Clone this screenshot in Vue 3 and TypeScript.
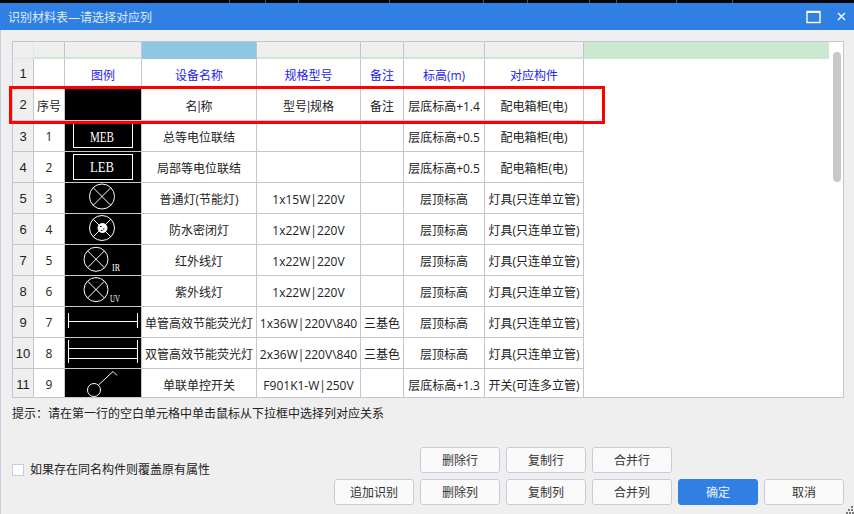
<template>
  <div class="page">
    <svg class="strip" width="854" height="3">
      <rect width="854" height="3" fill="#050505" />
      <rect v-for="x in stripTicks" :key="x" :x="x" y="0" width="1" height="3" fill="#1f5f9f" />
    </svg>

    <div class="titlebar">
      <span class="title">识别材料表—请选择对应列</span>
      <div class="win-btns">
        <svg width="15" height="14" viewBox="0 0 15 14">
          <rect x="1" y="1.5" width="13" height="11" fill="none" stroke="#fff" stroke-width="1.4" />
          <rect x="1" y="1" width="13" height="2" fill="#fff" />
        </svg>
        <svg width="9" height="9" viewBox="0 0 9 9">
          <path d="M1 1 L8 8 M8 1 L1 8" stroke="#fff" stroke-width="1.4" fill="none" />
        </svg>
      </div>
    </div>

    <div class="content">
      <div class="sheet-wrap">
        <div class="sheet">
          <div class="row head">
            <div class="cell rh"></div>
            <div class="cell"></div>
            <div class="cell"></div>
            <div class="cell picked"></div>
            <div class="cell"></div>
            <div class="cell"></div>
            <div class="cell"></div>
            <div class="cell"></div>
            <div class="rest"></div>
          </div>

          <div class="row first">
            <div class="cell rh">1</div>
            <div class="cell"></div>
            <div v-for="h in headers" :key="h" class="cell blue">{{ h }}</div>
          </div>

          <div class="row second">
            <div class="cell rh">2</div>
            <div class="cell">序号</div>
            <div class="cell black"></div>
            <div class="cell">名<span class="bar">|</span>称</div>
            <div class="cell">型号<span class="bar">|</span>规格</div>
            <div class="cell">备注</div>
            <div class="cell">层底标高+1.4</div>
            <div class="cell">配电箱柜(电)</div>
          </div>

          <div v-for="(r, i) in rows" :key="i" class="row">
            <div class="cell rh">{{ i + 3 }}</div>
            <div class="cell num">{{ i + 1 }}</div>
            <div class="cell black">
              <svg width="76" height="30" viewBox="0 0 76 30" fill="none" stroke="#fff">
                <template v-if="r.icon === 'meb'">
                  <rect x="8.5" y="-5.5" width="59" height="32" />
                  <text x="25" y="21" class="cad" textLength="24" lengthAdjust="spacingAndGlyphs">MEB</text>
                </template>
                <template v-else-if="r.icon === 'leb'">
                  <rect x="8.5" y="2.5" width="59" height="25" />
                  <text x="25" y="20" class="cad" textLength="24" lengthAdjust="spacingAndGlyphs">LEB</text>
                </template>
                <template v-else-if="r.icon === 'lamp'">
                  <circle cx="37" cy="13.5" r="12.5" />
                  <path d="M28.2 4.7 L45.8 22.3 M45.8 4.7 L28.2 22.3" />
                </template>
                <template v-else-if="r.icon === 'sealed'">
                  <circle cx="37" cy="14" r="12.5" />
                  <path d="M28.2 5.2 L45.8 22.8 M45.8 5.2 L28.2 22.8" />
                  <circle cx="37.5" cy="14" r="4.5" fill="#fff" />
                  <path d="M35 12.5 h1.5 M38 15 h1.5 M36 16.5 h1.5" stroke="#000" />
                </template>
                <template v-else-if="r.icon === 'ir'">
                  <circle cx="31" cy="14.3" r="12" />
                  <path d="M22.5 5.8 L39.5 22.8 M39.5 5.8 L22.5 22.8" />
                  <text x="47" y="26" class="cad small" textLength="8" lengthAdjust="spacingAndGlyphs">IR</text>
                </template>
                <template v-else-if="r.icon === 'uv'">
                  <circle cx="31" cy="13.6" r="12" />
                  <path d="M22.5 5.1 L39.5 22.1 M39.5 5.1 L22.5 22.1" />
                  <text x="45" y="26" class="cad small" textLength="10" lengthAdjust="spacingAndGlyphs">UV</text>
                </template>
                <template v-else-if="r.icon === 'tube1'">
                  <path d="M3.5 6 V21 M72.5 6 V21 M3.5 14.5 H72.5" />
                </template>
                <template v-else-if="r.icon === 'tube2'">
                  <path d="M3.5 2 V25 M72.5 2 V25 M3.5 10.5 H72.5 M3.5 20.5 H72.5" />
                </template>
                <template v-else-if="r.icon === 'switch'">
                  <circle cx="29" cy="21" r="6.5" />
                  <path d="M33.5 16 L48 2.5 L52 6.5" />
                </template>
              </svg>
            </div>
            <div class="cell">{{ r.name }}</div>
            <div class="cell">{{ r.spec }}</div>
            <div class="cell">{{ r.note }}</div>
            <div class="cell">{{ r.level }}</div>
            <div class="cell">{{ r.part }}</div>
          </div>
        </div>
        <div class="scroll-thumb"></div>
        <div class="red-box"></div>
      </div>

      <div class="hint">提示：请在第一行的空白单元格中单击鼠标从下拉框中选择列对应关系</div>

      <div class="bottom">
        <label class="check">
          <span class="box"></span>
          如果存在同名构件则覆盖原有属性
        </label>
        <div class="actions">
          <div class="btn-row">
            <button class="btn">删除行</button>
            <button class="btn">复制行</button>
            <button class="btn">合并行</button>
            <span class="btn-gap"></span>
          </div>
          <div class="btn-row">
            <button class="btn">追加识别</button>
            <button class="btn">删除列</button>
            <button class="btn">复制列</button>
            <button class="btn">合并列</button>
            <button class="btn primary">确定</button>
            <button class="btn">取消</button>
          </div>
        </div>
      </div>
    </div>

    <svg class="grip" width="8" height="8" viewBox="0 0 8 8" fill="#7a7a7a">
      <rect x="5" y="0" width="2" height="2" />
      <rect x="2" y="3" width="2" height="2" />
      <rect x="5" y="3" width="2" height="2" />
      <rect x="0" y="6" width="2" height="2" />
      <rect x="3" y="6" width="2" height="2" />
      <rect x="6" y="6" width="2" height="2" />
    </svg>
  </div>
</template>

<script setup lang="ts">
type Icon = 'meb' | 'leb' | 'lamp' | 'sealed' | 'ir' | 'uv' | 'tube1' | 'tube2' | 'switch'

interface Row {
  icon: Icon
  name: string
  spec: string
  note: string
  level: string
  part: string
}

const stripTicks = [229, 265, 298, 389, 483, 527, 589, 616, 676, 732]

const headers = ['图例', '设备名称', '规格型号', '备注', '标高(m)', '对应构件']

const rows: Row[] = [
  { icon: 'meb', name: '总等电位联结', spec: '', note: '', level: '层底标高+0.5', part: '配电箱柜(电)' },
  { icon: 'leb', name: '局部等电位联结', spec: '', note: '', level: '层底标高+0.5', part: '配电箱柜(电)' },
  { icon: 'lamp', name: '普通灯(节能灯)', spec: '1x15W|220V', note: '', level: '层顶标高', part: '灯具(只连单立管)' },
  { icon: 'sealed', name: '防水密闭灯', spec: '1x22W|220V', note: '', level: '层顶标高', part: '灯具(只连单立管)' },
  { icon: 'ir', name: '红外线灯', spec: '1x22W|220V', note: '', level: '层顶标高', part: '灯具(只连单立管)' },
  { icon: 'uv', name: '紫外线灯', spec: '1x22W|220V', note: '', level: '层顶标高', part: '灯具(只连单立管)' },
  { icon: 'tube1', name: '单管高效节能荧光灯', spec: '1x36W|220V\\840', note: '三基色', level: '层顶标高', part: '灯具(只连单立管)' },
  { icon: 'tube2', name: '双管高效节能荧光灯', spec: '2x36W|220V\\840', note: '三基色', level: '层顶标高', part: '灯具(只连单立管)' },
  { icon: 'switch', name: '单联单控开关', spec: 'F901K1-W|250V', note: '', level: '层底标高+1.3', part: '开关(可连多立管)' }
]
</script>

<style scoped>
.page {
  position: relative;
  width: 854px;
  height: 514px;
  overflow: hidden;
  background: #efefef;
  font-family: "Open Sans", "Noto Sans CJK SC", sans-serif;
  font-size: 12px;
  color: #222;
  display: flex;
  flex-direction: column;
}

.strip {
  display: block;
  flex-shrink: 0;
}

.titlebar {
  height: 27px;
  flex-shrink: 0;
  background: #2f80e2;
  display: flex;
  align-items: center;
  justify-content: space-between;
  padding: 0 8px;
}
.title {
  color: #dfeafa;
  font-size: 12px;
}
.win-btns {
  display: flex;
  align-items: center;
  gap: 16px;
}
.win-btns svg {
  display: block;
}

.content {
  flex: 1;
  min-height: 0;
  display: flex;
  flex-direction: column;
  padding: 11px 10px 10px 11px;
  border-left: 1px solid #c8cce0;
}

.sheet-wrap {
  position: relative;
  height: 357px;
  flex-shrink: 0;
  background: #fff;
  border: 1px solid #c5c7d0;
  box-sizing: border-box;
}
.sheet {
  height: 100%;
  overflow: hidden;
}

.row {
  display: grid;
  grid-template-columns: 21px 31px 77px 115px 104px 43px 81px 99px;
  height: 31px;
}
.row.head {
  grid-template-columns: 21px 31px 77px 115px 104px 43px 81px 99px 245px;
  height: 17px;
}
.row.first {
  height: 28px;
}
.row.second {
  height: 34px;
}

.cell {
  display: flex;
  align-items: center;
  justify-content: center;
  white-space: nowrap;
  overflow: hidden;
  padding-top: 2px;
  border-right: 1px solid #c5c7d0;
  border-bottom: 1px solid #c5c7d0;
  box-sizing: border-box;
}
.num {
  padding-top: 0;
}
.row.first .cell,
.row.second .cell {
  padding-top: 4px;
}
.rh {
  background: #efefef;
  font-family: "Liberation Sans", sans-serif;
  font-size: 13px;
  padding-top: 0;
}
.row.first .rh,
.row.second .rh {
  padding-top: 2px;
}
.bar {
  font-family: "Liberation Sans", sans-serif;
  color: #4a2a6a;
}
.head .cell {
  background: #efefef;
  border-bottom: 2px solid #cde8d0;
}
.head .rh {
  border-bottom: 1px solid #e4e4e4;
  border-right: 1px solid #e4e4e4;
}
.head .picked {
  background: #8fc7e3;
  border-bottom-color: #8fc7e3;
}
.rest {
  background: #cde8d0;
}
.blue {
  color: #2222f0;
}
.black {
  background: #000;
  padding: 0;
  align-items: flex-start;
}
.black svg {
  display: block;
  overflow: visible;
  shape-rendering: crispEdges;
}
.black svg circle,
.black svg path {
  shape-rendering: geometricPrecision;
}
.cad {
  font-family: "Liberation Serif", serif;
  font-size: 14px;
  fill: #fff;
  stroke: none;
}
.cad.small {
  font-size: 10.5px;
}

.scroll-thumb {
  position: absolute;
  left: 820px;
  top: 10px;
  width: 8px;
  height: 130px;
  border-radius: 4px;
  background: #c8c8c8;
}
.red-box {
  position: absolute;
  left: -4px;
  top: 44px;
  width: 596px;
  height: 38px;
  border: 3px solid #f00;
  box-sizing: border-box;
  pointer-events: none;
}

.hint {
  margin-top: 7px;
  line-height: 18px;
}

.bottom {
  flex: 1;
  min-height: 0;
  display: flex;
  justify-content: space-between;
  align-items: flex-start;
  padding-top: 24px;
}
.check {
  display: flex;
  align-items: center;
  gap: 6px;
  margin-top: 15px;
  line-height: 16px;
}
.box {
  width: 12px;
  height: 12px;
  background: #fff;
  border: 1px solid #c8cbdc;
  box-sizing: border-box;
}
.actions {
  display: flex;
  flex-direction: column;
  gap: 6px;
}
.btn-row {
  display: flex;
  gap: 6px;
  justify-content: flex-end;
}
.btn-gap {
  width: 166px;
}
.btn {
  width: 80px;
  height: 26px;
  padding: 0;
  background: #fafafa;
  border: 1px solid #c8cbdc;
  border-radius: 3px;
  font: inherit;
  color: #333;
}
.btn.primary {
  background: #2f80e2;
  border-color: #2f80e2;
  color: #e8f1fc;
}

.grip {
  position: absolute;
  right: 0;
  bottom: 0;
}
</style>
